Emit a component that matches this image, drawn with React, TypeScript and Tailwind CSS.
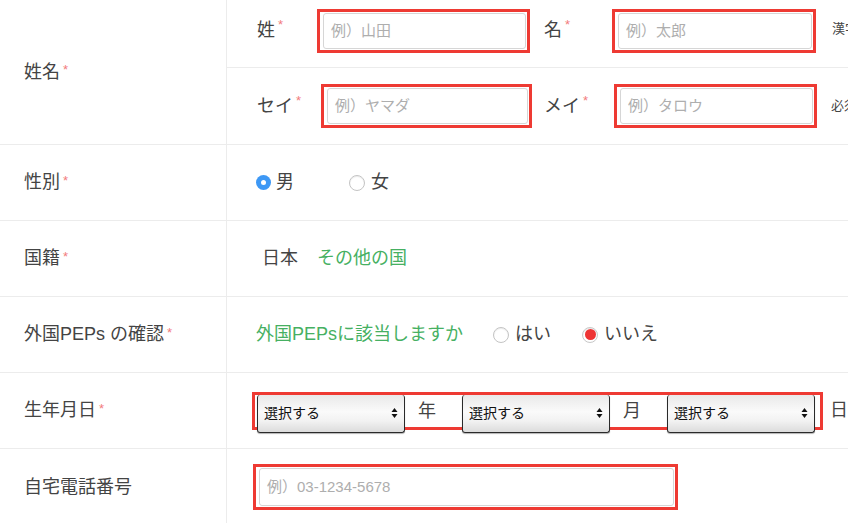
const font = "font-['Liberation_Sans','Noto_Sans_CJK_JP',sans-serif]";

function Star() {
  return <span className="ml-[3px] text-[13px] text-[#f27c7c] relative -top-[2px]">*</span>;
}

function BoxedInput({ placeholder, width, height = "h-[44px]" }: { placeholder: string; width: string; height?: string }) {
  return (
    <div className={`${width} ${height} shrink-0 border-[3px] border-[#ee3a33] flex pl-[3px] pr-[1px] py-[1px]`}>
      <div className="flex-1 rounded-[3px] border border-[#d6d6d6] flex items-center px-[7px] text-[15px] text-[#aeaeae]">
        {placeholder}
      </div>
    </div>
  );
}

function Radio({ state }: { state: "off" | "blue" | "red" }) {
  if (state === "blue") {
    return (
      <span className="inline-flex shrink-0 w-[15px] h-[15px] rounded-full bg-[#3d98f5] items-center justify-center">
        <span className="w-[5px] h-[5px] rounded-full bg-white" />
      </span>
    );
  }
  if (state === "red") {
    return (
      <span className="inline-flex shrink-0 w-[16px] h-[16px] rounded-full border border-[#c8c8c8] bg-white items-center justify-center shadow-[inset_0_1px_1px_rgba(0,0,0,0.1)]">
        <span className="w-[11px] h-[11px] rounded-full bg-[#ee3434]" />
      </span>
    );
  }
  return (
    <span className="inline-block shrink-0 w-[16px] h-[16px] rounded-full border-[1.5px] border-[#c4c4c4] bg-white shadow-[inset_0_1px_1px_rgba(0,0,0,0.08)]" />
  );
}

function SelectBox() {
  return (
    <div className="w-[148px] h-[38px] shrink-0 -mb-[2px] rounded-[3px] border-x border-b border-[#2a2a2a] bg-[linear-gradient(to_bottom,#e9e9e9,#fafafa_45%,#f2f2f2_70%,#dcdcdc)] shadow-[0_1px_1px_rgba(0,0,0,0.3)] flex items-center justify-between pl-[6px] pr-[6px] text-[14px] text-[#111]">
      <span>選択する</span>
      <svg width="7" height="12" viewBox="0 0 7 12">
        <path d="M3.5 1 L6.5 5 L0.5 5 Z" fill="#111" />
        <path d="M3.5 11 L6.5 7 L0.5 7 Z" fill="#111" />
      </svg>
    </div>
  );
}

function Label({ children, star = true }: { children: React.ReactNode; star?: boolean }) {
  return (
    <div className="w-[227px] shrink-0 border-r border-[#ececec] flex items-center pl-[24px] text-[18px] text-[#444]">
      <span>{children}</span>
      {star && <Star />}
    </div>
  );
}

export default function App() {
  return (
    <div className={`w-[848px] h-[523px] overflow-hidden bg-white ${font}`}>
      <div className="w-[1000px]">
        {/* 姓名 */}
        <div className="flex border-b border-[#ececec]">
          <Label>姓名</Label>
          <div className="flex-1 flex flex-col">
            <div className="h-[68px] border-b border-[#ececec] flex items-start pt-[9px] text-[18px] text-[#444]">
              <div className="w-[90px] pl-[30px] pt-[8px] flex">
                <span>姓</span>
                <Star />
              </div>
              <BoxedInput placeholder="例）山田" width="w-[213px]" />
              <div className="w-[82px] pl-[14px] pt-[8px] flex">
                <span>名</span>
                <Star />
              </div>
              <BoxedInput placeholder="例）太郎" width="w-[204px]" />
              <span className="ml-[16px] pt-[10px] text-[13px] text-[#444]">漢字で入力してください</span>
            </div>
            <div className="h-[76px] flex items-center text-[18px] text-[#444]">
              <div className="w-[94px] pl-[30px] flex">
                <span>セイ</span>
                <Star />
              </div>
              <BoxedInput placeholder="例）ヤマダ" width="w-[211px]" />
              <div className="w-[82px] pl-[12px] flex">
                <span>メイ</span>
                <Star />
              </div>
              <BoxedInput placeholder="例）タロウ" width="w-[203px]" />
              <span className="ml-[14px] text-[13px] text-[#444]">必須項目です</span>
            </div>
          </div>
        </div>

        {/* 性別 */}
        <div className="flex h-[76px] border-b border-[#ececec]">
          <Label>性別</Label>
          <div className="flex-1 flex items-center pl-[29px] text-[18px] text-[#444]">
            <Radio state="blue" />
            <span className="ml-[5px]">男</span>
            <span className="ml-[55px] flex">
              <Radio state="off" />
            </span>
            <span className="ml-[6px]">女</span>
          </div>
        </div>

        {/* 国籍 */}
        <div className="flex h-[76px] border-b border-[#ececec]">
          <Label>国籍</Label>
          <div className="flex-1 flex items-center pl-[35px] text-[18px]">
            <span className="text-[#444]">日本</span>
            <span className="ml-[19px] text-[#46b062]">その他の国</span>
          </div>
        </div>

        {/* 外国PEPs */}
        <div className="flex h-[76px] border-b border-[#ececec]">
          <Label>外国PEPs の確認</Label>
          <div className="flex-1 flex items-center pl-[29px] text-[18px]">
            <span className="text-[#46b062]">外国PEPsに該当しますか</span>
            <span className="ml-[30px] flex">
              <Radio state="off" />
            </span>
            <span className="ml-[6px] text-[#444]">はい</span>
            <span className="ml-[31px] flex">
              <Radio state="red" />
            </span>
            <span className="ml-[6px] text-[#444]">いいえ</span>
          </div>
        </div>

        {/* 生年月日 */}
        <div className="flex h-[76px] border-b border-[#ececec]">
          <Label>生年月日</Label>
          <div className="flex-1 flex items-center pl-[25px] text-[18px] text-[#444]">
            <div className="h-[38px] w-[571px] shrink-0 border-[3px] border-[#ee3a33] flex items-start pl-[2px]">
              <SelectBox />
              <span className="w-[57px] pl-[13px] pt-[3px]">年</span>
              <SelectBox />
              <span className="w-[57px] pl-[13px] pt-[3px]">月</span>
              <SelectBox />
            </div>
            <span className="ml-[7px]">日</span>
          </div>
        </div>

        {/* 自宅電話番号 */}
        <div className="flex h-[76px]">
          <Label star={false}>自宅電話番号</Label>
          <div className="flex-1 flex items-center pl-[26px]">
            <BoxedInput placeholder="例）03-1234-5678" width="w-[425px]" height="h-[46px]" />
          </div>
        </div>
      </div>
    </div>
  );
}
